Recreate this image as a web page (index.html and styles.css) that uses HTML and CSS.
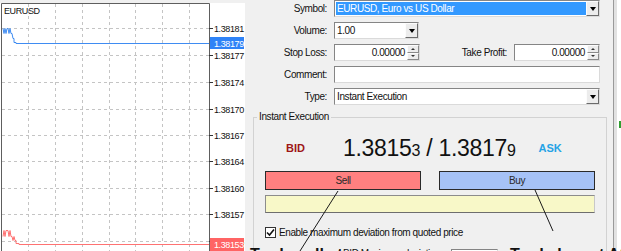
FILE: index.html
```html
<!DOCTYPE html>
<html lang="en">
<head>
    <meta charset="UTF-8">
    <title>Order</title>
    <link rel="stylesheet" href="styles.css">
</head>
<body>
<div class="window">
    <!-- chart -->
    <div class="chart-pane">
        <svg class="chart" width="245" height="251" viewBox="0 0 245 251">
            <rect x="0" y="0" width="245" height="3" fill="#f0f0f0"/>
            <rect x="0" y="3" width="245" height="248" fill="#ffffff"/>
            <g stroke="#c4c4c4" stroke-dasharray="3 3" fill="none">
                <path d="M28.5 4V251M55.5 4V251M82.5 4V251M109.5 4V251M135.5 4V251M162.5 4V251M189.5 4V251"/>
                <path d="M2 28.5H209M2 55.5H209M2 82.5H209M2 109.5H209M2 135.5H209M2 161.5H209M2 188.5H209M2 214.5H209M2 241.5H209"/>
            </g>
            <path d="M1.5 251V3.5H209.5V251" stroke="#5e5e5e" fill="none"/>
            <path d="M209 28.5h4M209 55.5h4M209 82.5h4M209 109.5h4M209 135.5h4M209 161.5h4M209 188.5h4M209 214.5h4M209 241.5h4" stroke="#333"/>
            <text class="symbol" x="4" y="14">EURUSD</text>
            <g class="axis">
                <text x="214" y="32">1.38181</text>
                <text x="214" y="59">1.38177</text>
                <text x="214" y="86">1.38174</text>
                <text x="214" y="113">1.38170</text>
                <text x="214" y="139">1.38167</text>
                <text x="214" y="165">1.38164</text>
                <text x="214" y="192">1.38160</text>
                <text x="214" y="218">1.38157</text>
                <text x="214" y="245">1.38153</text>
            </g>
            <polyline fill="none" stroke="#3f8cf2" stroke-width="1"
                points="3,28.5 4,33.5 5,28.5 6,33.5 7,28.5 8,28.5 9,33.5 10,28.5 11,33.5 12,33.5 13,38.5 14,38.5 14,42.5 16,42.5 16,43.5 209,43.5"/>
            <polyline fill="none" stroke="#ff7272" stroke-width="1"
                points="3,236.5 4,230.5 5,236.5 6,230.5 8,230.5 9,236.5 10,230.5 11,236.5 12,236.5 13,240.5 14,236.5 15,240.5 16,240.5 16,243.5 19,243.5 19,244.5 209,244.5"/>
            <rect x="210" y="37" width="34" height="12" fill="#2f83f7"/>
            <text class="tag" x="214" y="47">1.38179</text>
            <rect x="210" y="238" width="34" height="13" fill="#ff6464"/>
            <text class="tag" x="214" y="248">1.38153</text>
        </svg>
    </div>

    <!-- order dialog -->
    <div class="order-pane">
        <div class="order-form">
            <label>Symbol:</label>
            <div class="field">
                <span class="value selected">EURUSD, Euro vs US Dollar</span>
                <span class="drop"></span>
            </div>

            <label>Volume:</label>
            <div class="field volume">
                <span class="value">1.00</span>
                <span class="drop"></span>
            </div>

            <label>Stop Loss:</label>
            <div class="pair">
                <div class="field small">
                    <span class="value num">0.00000</span>
                    <span class="spin"><i class="up"></i><i class="down"></i></span>
                </div>
                <label class="pair-label">Take Profit:</label>
                <div class="field small">
                    <span class="value num">0.00000</span>
                    <span class="spin"><i class="up"></i><i class="down"></i></span>
                </div>
            </div>

            <label>Comment:</label>
            <div class="field">
                <span class="value"></span>
            </div>

            <label>Type:</label>
            <div class="field">
                <span class="value">Instant Execution</span>
                <span class="drop"></span>
            </div>
        </div>

        <fieldset class="execution">
            <legend>Instant Execution</legend>
            <div class="quote">
                <span class="bid">BID</span>
                <span class="price">1.3815<small>3</small> / 1.3817<small>9</small></span>
                <span class="ask">ASK</span>
            </div>
            <div class="trade-buttons">
                <button class="sell">Sell</button>
                <button class="buy">Buy</button>
            </div>
            <div class="quote-bar"></div>
            <div class="check-row">
                <span class="checkbox">
                    <svg width="9" height="9" viewBox="0 0 9 9"><path d="M1 4.5 3.5 7 8 1.5" fill="none" stroke="#111" stroke-width="1.6"/></svg>
                </span>
                <span>Enable maximum deviation from quoted price</span>
            </div>
            <div class="deviation-row">
                <span>BID Maximum deviation:</span>
                <span class="field dev"><span class="value num">0</span></span>
            </div>
        </fieldset>
    </div>

    <div class="side"></div>

    <!-- annotations over the dialog -->
    <svg class="annotations" width="621" height="251" viewBox="0 0 621 251">
        <path d="M338 191 300 251M535 190 553 231" stroke="#1a1a1a" stroke-width="1" fill="none"/>
    </svg>
    <div class="note note-sell">Trade sell at</div>
    <div class="note note-buy">Trade buy at ASK</div>
</div>
</body>
</html>
```

FILE: styles.css
```css
* {
    margin: 0;
    padding: 0;
    box-sizing: border-box;
}

html, body {
    width: 621px;
    height: 251px;
    overflow: hidden;
}

body {
    font-family: "Liberation Sans", Arial, sans-serif;
    font-size: 10px;
    letter-spacing: -0.4px;
    color: #111;
    background: #f0f0f0;
}

.window {
    position: relative;
    display: flex;
    height: 251px;
    overflow: hidden;
}

/* chart */
.chart-pane {
    width: 245px;
    flex: none;
}

.chart {
    display: block;
}

.chart text {
    font-family: "Liberation Sans", Arial, sans-serif;
    font-size: 9px;
    letter-spacing: -0.4px;
    fill: #111;
}

.chart .tag {
    fill: #fff;
}

/* dialog */
.order-pane {
    width: 368px;
    flex: none;
    background: #f0f0f0;
}

.order-form {
    display: grid;
    grid-template-columns: 74px 266px;
    column-gap: 7px;
    row-gap: 5px;
    padding-left: 8px;
}

.order-form label {
    text-align: right;
    line-height: 17px;
}

.field {
    display: flex;
    height: 17px;
    background: #fff;
    border: 1px solid;
    border-color: #858585 #dadada #dadada #858585;
}

.field .value {
    flex: 1;
    padding-left: 2px;
    line-height: 15px;
    white-space: nowrap;
    overflow: hidden;
}

.field .value.selected {
    margin: 1px 0 1px 1px;
    padding-left: 1px;
    line-height: 13px;
    background: #3399ff;
    color: #fff;
}

.field .value.num {
    text-align: right;
    padding-right: 2px;
}

.field.volume {
    width: 85px;
}

.drop {
    width: 13px;
    display: flex;
    align-items: center;
    justify-content: center;
    background: #ececec;
    border: 1px solid;
    border-color: #fcfcfc #6b6b6b #6b6b6b #fcfcfc;
}

.drop::before {
    content: "";
    border-left: 3.5px solid transparent;
    border-right: 3.5px solid transparent;
    border-top: 4px solid #000;
}

.pair {
    display: flex;
}

.pair .field.small {
    width: 86px;
    flex: none;
}

.order-form .pair-label {
    flex: 1;
    padding-right: 7px;
}

.spin {
    width: 12px;
    display: flex;
    flex-direction: column;
}

.spin i {
    flex: 1;
    display: flex;
    align-items: center;
    justify-content: center;
    background: #ececec;
    border: 1px solid;
    border-color: #fcfcfc #8a8a8a #8a8a8a #fcfcfc;
}

.spin .up::before {
    content: "";
    border-left: 2px solid transparent;
    border-right: 2px solid transparent;
    border-bottom: 2px solid #333;
}

.spin .down::before {
    content: "";
    border-left: 2px solid transparent;
    border-right: 2px solid transparent;
    border-top: 2px solid #333;
}

/* instant execution group */
.execution {
    margin: 6px 6px 0 8px;
    height: 160px;
    border: 1px solid #d2d2d2;
    padding: 12px 11px 0 11px;
}

.execution legend {
    margin-left: -8px;
    padding: 0 2px;
    line-height: 12px;
}

.quote {
    display: flex;
    align-items: center;
    height: 26px;
    padding-left: 21px;
}

.bid,
.ask {
    font-weight: bold;
    font-size: 11px;
    letter-spacing: 0;
}

.bid {
    color: #9e1616;
}

.ask {
    margin-left: 23px;
    color: #25a3e6;
}

.price {
    margin-left: 38px;
    font-size: 23px;
    letter-spacing: -0.3px;
    color: #111;
}

.price small {
    font-size: 16px;
}

.trade-buttons {
    display: flex;
    gap: 18px;
    margin-top: 10px;
}

.trade-buttons button {
    width: 156px;
    height: 19px;
    font: inherit;
    letter-spacing: inherit;
    color: #2a2a2a;
    border: 1px solid;
}

.sell {
    background: #ff8080;
    border-color: #ffb4b4 #b94f4f #b94f4f #ffb4b4;
}

.buy {
    background: #a6c2f6;
    border-color: #d4e2fc #6f8ec9 #6f8ec9 #d4e2fc;
}

.quote-bar {
    margin-top: 5px;
    height: 18px;
    background: #f8f8c8;
    border: 1px solid;
    border-color: #8c8c8c #c8c8c8 #6e6e6e #8c8c8c;
}

.check-row {
    display: flex;
    align-items: center;
    gap: 3px;
    height: 14px;
    margin-top: 12px;
}

.checkbox {
    width: 11px;
    height: 11px;
    display: flex;
    align-items: center;
    justify-content: center;
    background: #fff;
    border: 1px solid #333;
}

.deviation-row {
    display: flex;
    align-items: flex-start;
    gap: 8px;
    margin-top: 10px;
    padding-left: 78px;
    line-height: 1;
}

.field.dev {
    width: 47px;
}

/* neighbouring window */
.side {
    flex: 1;
    border-left: 1px solid #9a9a9a;
    background: linear-gradient(to right, #e2e2e2 3px, #fff 3px);
    position: relative;
}

.side::after {
    content: "";
    position: absolute;
    left: 5px;
    top: 121px;
    width: 3px;
    height: 7px;
    background: #2f9e2f;
}

/* annotations */
.annotations {
    position: absolute;
    left: 0;
    top: 0;
    pointer-events: none;
}

.note {
    position: absolute;
    top: 247px;
    font-weight: bold;
    font-size: 16px;
    line-height: 16px;
    letter-spacing: 0;
    color: #111;
    white-space: nowrap;
}

.note-sell {
    left: 250px;
}

.note-buy {
    left: 510px;
}
```
